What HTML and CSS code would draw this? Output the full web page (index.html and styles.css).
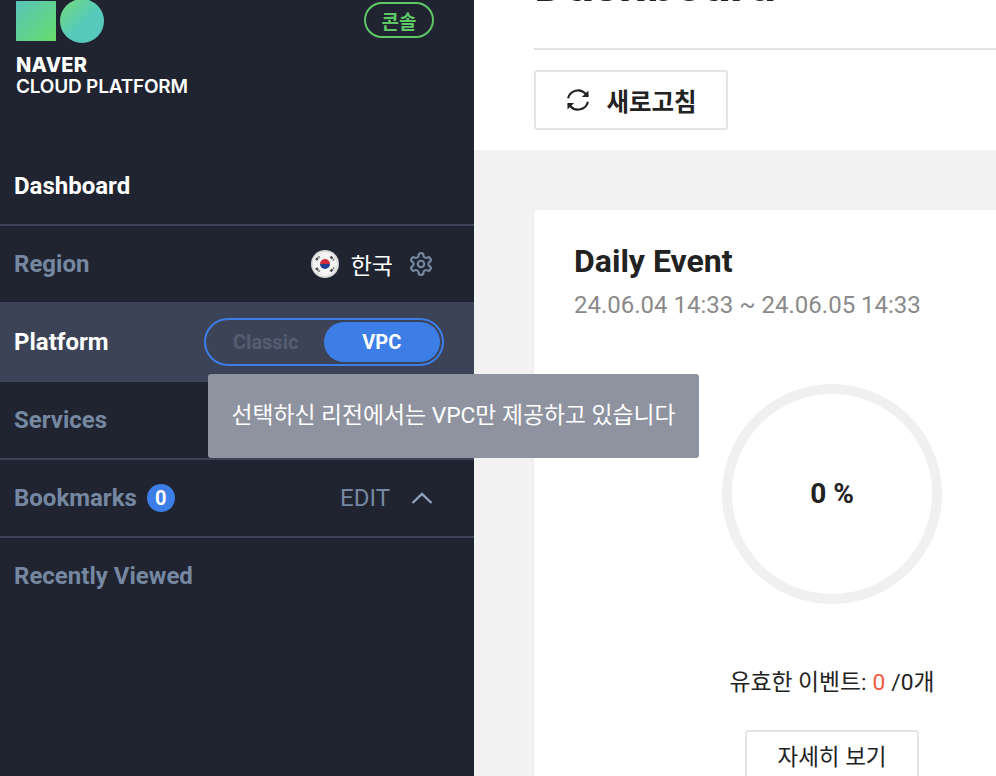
FILE: index.html
```html
<!DOCTYPE html>
<html lang="ko">
<head>
<meta charset="utf-8">
<title>Dashboard</title>
<link rel="stylesheet" href="styles.css">
</head>
<body>
<div class="app">
  <aside class="sidebar">
    <div class="brand">
      <div class="logo">
        <div class="logo-shapes"><span class="logo-square"></span><span class="logo-circle"></span></div>
        <div class="logo-naver">NAVER</div>
        <div class="logo-cloud">CLOUD PLATFORM</div>
      </div>
      <span class="console-badge">콘솔</span>
    </div>
    <nav class="nav">
      <div class="nav-row nav-row-first"><span class="nav-label nav-label-white">Dashboard</span></div>
      <div class="nav-row">
        <span class="nav-label">Region</span>
        <div class="region">
          <svg class="flag" viewBox="0 0 28 28" width="28" height="28">
            <defs><radialGradient id="flagfill"><stop offset=".8" stop-color="#f4f4f4"/><stop offset="1" stop-color="#c9c9c9"/></radialGradient></defs>
            <circle cx="14" cy="14" r="14" fill="url(#flagfill)"/>
            <path d="M9 14a5 5 0 0 1 10 0z" fill="#cf2b3a"/>
            <path d="M9 14a5 5 0 0 0 10 0z" fill="#1d3f8f"/>
            <g stroke="#4a4a4a" stroke-width="2.4" stroke-dasharray="3 1">
              <path d="M5 10 8.500 6.500"/><path d="M19.500 6.500l3.500 3.500"/><path d="M5 18l3.500 3.500"/><path d="M19.500 21.500l3.500-3.500"/>
            </g>
          </svg>
          <span class="region-name">한국</span>
          <svg class="gear" viewBox="0 0 24 24" width="26" height="26" fill="none" stroke="#7688a1" stroke-width="2" stroke-linecap="round" stroke-linejoin="round">
            <circle cx="12" cy="12" r="3"/>
            <path d="M12.220 2h-.44a2 2 0 0 0-2 2v.180a2 2 0 0 1-1 1.730l-.43.250a2 2 0 0 1-2 0l-.150-.080a2 2 0 0 0-2.730.730l-.220.380a2 2 0 0 0 .730 2.730l.150.100a2 2 0 0 1 1 1.720v.510a2 2 0 0 1-1 1.740l-.150.090a2 2 0 0 0-.730 2.730l.220.380a2 2 0 0 0 2.730.730l.150-.080a2 2 0 0 1 2 0l.430.250a2 2 0 0 1 1 1.730V20a2 2 0 0 0 2 2h.440a2 2 0 0 0 2-2v-.180a2 2 0 0 1 1-1.730l.430-.250a2 2 0 0 1 2 0l.150.080a2 2 0 0 0 2.730-.730l.220-.390a2 2 0 0 0-.730-2.730l-.150-.080a2 2 0 0 1-1-1.740v-.500a2 2 0 0 1 1-1.740l.150-.090a2 2 0 0 0 .730-2.730l-.220-.380a2 2 0 0 0-2.730-.730l-.150.080a2 2 0 0 1-2 0l-.430-.250a2 2 0 0 1-1-1.730V4a2 2 0 0 0-2-2z"/>
          </svg>
        </div>
      </div>
      <div class="nav-row nav-row-active">
        <span class="nav-label nav-label-white">Platform</span>
        <div class="toggle">
          <span class="toggle-off">Classic</span>
          <span class="toggle-on">VPC</span>
        </div>
      </div>
      <div class="nav-row"><span class="nav-label">Services</span></div>
      <div class="nav-row">
        <span class="nav-label">Bookmarks</span>
        <span class="count">0</span>
        <span class="edit">EDIT</span>
        <svg class="chevron" viewBox="0 0 22 12" width="22" height="12" fill="none" stroke="#8fa0b8" stroke-width="2.400"><path d="M1.500 11 11 2l9.500 9"/></svg>
      </div>
      <div class="nav-row nav-row-last"><span class="nav-label">Recently Viewed</span></div>
    </nav>
  </aside>
  <main class="main">
    <header class="head">
      <h1 class="title">Dashboard</h1>
      <div class="tools">
        <button class="refresh">
          <svg viewBox="0 0 24 24" width="28" height="28" fill="none" stroke="#222" stroke-width="1.800">
            <path d="M3.500 10.500a8.700 8.700 0 0 1 15-3.800L20.500 9"/>
            <path d="M20.500 13.500a8.700 8.700 0 0 1-15 3.800L3.500 15"/>
            <path d="M21 3.800V9.500h-5.700z" fill="#222" stroke="none"/>
            <path d="M3 20.200V14.500h5.700z" fill="#222" stroke="none"/>
          </svg>
          <span>새로고침</span>
        </button>
      </div>
    </header>
    <section class="content">
      <div class="card">
        <h2 class="card-title">Daily Event</h2>
        <div class="card-range">24.06.04 14:33 ~ 24.06.05 14:33</div>
        <div class="donut"><span>0 %</span></div>
        <div class="valid">유효한 이벤트: <em>0</em> /0개</div>
        <button class="detail">자세히 보기</button>
      </div>
    </section>
  </main>
  <div class="tooltip">선택하신 리전에서는 VPC만 제공하고 있습니다</div>
</div>
</body>
</html>
```
FILE: styles.css
```css
* { box-sizing: border-box; }
html, body { margin: 0; height: 100%; overflow: hidden; }
body { font-family: Roboto, "Noto Sans CJK KR", sans-serif; background: #f2f2f2; color: #222; }
.app { position: relative; display: flex; width: 996px; height: 776px; overflow: hidden; }

.sidebar { flex: 0 0 474px; height: 776px; background: #1f2430; overflow: hidden; }
.brand { display: flex; justify-content: space-between; align-items: flex-start; height: 147px; padding: 2px 40px 0 16px; }
.logo-shapes { display: flex; align-items: flex-start; gap: 4px; height: 54px; margin-top: -3px; }
.logo-square { width: 40px; height: 40px; margin-top: 2px; background: linear-gradient(135deg, #58c5ba, #68dc6c); }
.logo-circle { width: 44px; height: 44px; border-radius: 50%; background: linear-gradient(135deg, #74dc78 0%, #56c9bc 55%, #56c9bc 100%); }
.logo-naver { margin-top: 2px; font: 800 20px/20px Inter, sans-serif; color: #fff; letter-spacing: .3px; }
.logo-cloud { margin-top: 1px; font: 600 19px/22px Inter, sans-serif; color: #fff; letter-spacing: -.2px; white-space: nowrap; }
.console-badge { display: flex; align-items: center; justify-content: center; width: 70px; height: 36px; border: 2px solid #5fc866; border-radius: 18px; font-size: 19px; font-weight: 700; color: #5fc866; }

.nav-row { display: flex; align-items: center; height: 78px; padding: 0 40px 0 14px; border-bottom: 2px solid #3d4357; }
.nav-row-first { height: 79px; }
.nav-row-active { background: #3d4357; }
.nav-row-last { height: 76px; border-bottom: 0; }
.nav-label { font-size: 24px; font-weight: 700; color: #7688a1; white-space: nowrap; }
.nav-label-white { color: #fff; }

.region { display: flex; align-items: center; margin-left: auto; }
.flag { margin-right: 12px; }
.region-name { font-size: 23px; color: #fff; margin-right: 15px; }
.toggle { display: flex; align-items: center; justify-content: space-between; width: 240px; height: 48px; margin-left: auto; margin-right: -10px; padding: 0 2px 0 1px; border: 2px solid #3c7ee6; border-radius: 24px; }
.toggle-off { width: 117px; padding-left: 26px; font-size: 20px; font-weight: 700; color: #565c70; }
.toggle-on { display: flex; align-items: center; justify-content: center; width: 117px; height: 40px; border-radius: 20px; background: #3c7ee6; color: #fff; font-size: 20px; font-weight: 700; }
.count { display: flex; align-items: center; justify-content: center; width: 28px; height: 28px; margin-left: 10px; border-radius: 50%; background: #3c7ee6; color: #fff; font-size: 20px; font-weight: 700; }
.edit { margin-left: auto; font-size: 24px; color: #7688a1; }
.chevron { margin-left: 21px; margin-right: 1px; }

.main { flex: 1; min-width: 0; overflow: hidden; }
.head { display: flow-root; height: 150px; padding: 0 0 0 60px; background: #fff; }
.title { height: 48px; margin: -45px 0 0; padding: 0; border: 0; font-size: 50px; line-height: 58px; font-weight: 700; color: #222; }
.tools { margin-top: 45px; padding-top: 20px; border-top: 2px solid #e3e3e3; }
.refresh { display: flex; align-items: center; justify-content: center; gap: 14px; width: 194px; height: 60px; padding: 0 1px 0 0; border: 2px solid #e3e3e3; border-radius: 3px; background: #fff; font: 700 24.500px Roboto, "Noto Sans CJK KR", sans-serif; color: #222; }

.content { padding: 60px 0 0 60px; }
.card { width: 600px; height: 700px; padding: 32px 0 0 40px; background: #fff; border-radius: 4px; box-shadow: 0 1px 3px rgba(0,0,0,.06); }
.card-title { margin: 0; font-size: 32px; line-height: 38px; font-weight: 700; color: #222; }
.card-range { margin-top: 10px; font-size: 24px; line-height: 30px; color: #8a8a8a; }
.donut { display: flex; align-items: center; justify-content: center; width: 220px; height: 220px; margin: 64px 0 0 148px; padding-bottom: 2px; border: 10px solid #f0f0f0; border-radius: 50%; font-size: 28px; font-weight: 700; color: #222; }
.valid { width: 220px; margin: 64px 0 0 148px; font-size: 22.800px; line-height: 30px; color: #222; white-space: nowrap; display: flex; justify-content: center; gap: 6px; }
.valid em { font-style: normal; color: #ef5a42; }
.detail { display: block; width: 174px; height: 50px; margin: 32px 0 0 171px; padding: 0; border: 2px solid #e3e3e3; border-radius: 3px; background: #fff; font: 400 22.500px Roboto, "Noto Sans CJK KR", sans-serif; color: #222; }

.tooltip { position: absolute; left: 208px; top: 374px; width: 491px; height: 84px; padding-bottom: 5px; display: flex; align-items: center; justify-content: center; border-radius: 3px; background: #8f93a0; color: #fff; font-size: 22.800px; white-space: nowrap; }
```
